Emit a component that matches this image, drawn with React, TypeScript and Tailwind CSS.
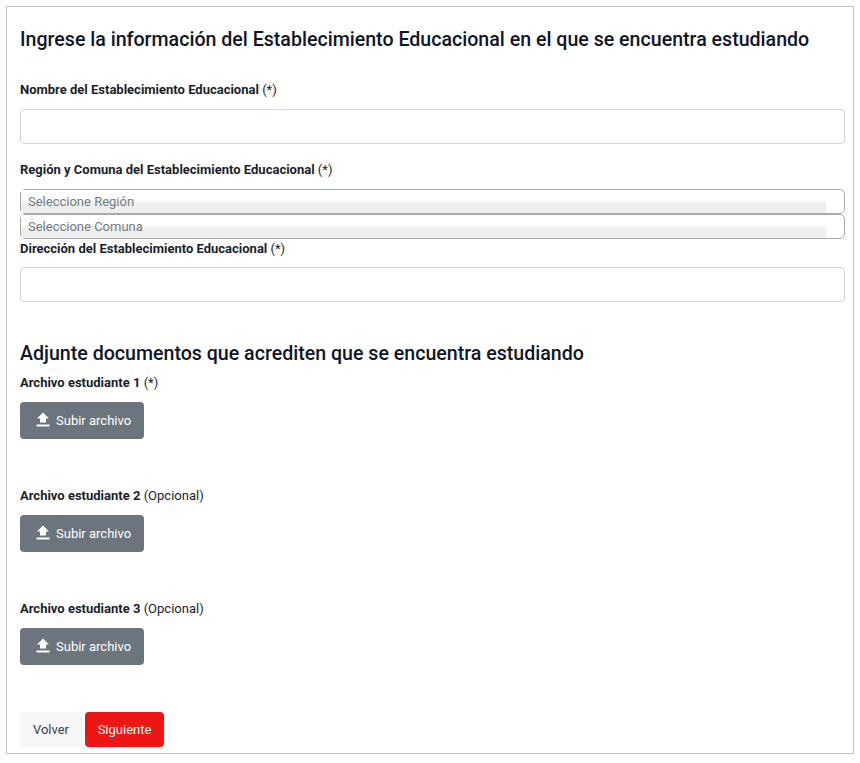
function Label({ children, note }: { children: string; note: string }) {
  return (
    <div className="text-[13px] leading-[19px] text-[#212529]">
      <span className="font-bold text-[#1a1f2b]">{children}</span> {note}
    </div>
  );
}

function TextBox() {
  return <input type="text" className="block h-[35px] w-full rounded-[4px] border border-[#ced4da] bg-white" />;
}

function SelectBox({ text }: { text: string }) {
  return (
    <div className="h-[25px] w-full rounded-[5px] border border-[#aaaaaa] bg-white pr-[18px]">
      <div className="h-[23px] bg-gradient-to-b from-white from-[40%] to-[#eeeeee] to-[60%] pl-[7px] text-[13px] leading-[24px] text-[#737b83]">
        {text}
      </div>
    </div>
  );
}

function UploadIcon() {
  return (
    <svg width="14" height="15" viewBox="0 0 14 15" fill="white" aria-hidden="true">
      <path d="M7 0.5 L13 6.5 H10 V10.5 H4 V6.5 H1 Z" />
      <rect x="0.5" y="12.5" width="13" height="2" />
    </svg>
  );
}

function UploadField({ label, note }: { label: string; note: string }) {
  return (
    <div className="h-[113px]">
      <Label note={note}>{label}</Label>
      <button className="mt-[10px] flex h-[37px] w-[124px] items-center justify-start gap-[6px] rounded-[4px] bg-[#6c757d] pl-[16px] text-[13px] text-white">
        <span className="-mt-[2px] flex"><UploadIcon /></span>
        Subir archivo
      </button>
    </div>
  );
}

export default function App() {
  return (
    <div className="h-[763px] bg-white p-[6px] font-['Roboto',sans-serif]">
      <div className="h-[748px] w-[848px] border border-[#c4c4c4] pl-[13px] pr-[8px] pt-[20px]">
        <h1 className="text-[19.6px] font-medium leading-[26px] text-[#0f1626]">
          Ingrese la información del Establecimiento Educacional en el que se encuentra estudiando
        </h1>
        <div className="mt-[27px]"><Label note="(*)">Nombre del Establecimiento Educacional</Label></div>
        <div className="mt-[10px]"><TextBox /></div>
        <div className="mt-[16px]"><Label note="(*)">Región y Comuna del Establecimiento Educacional</Label></div>
        <div className="mt-[10px]"><SelectBox text="Seleccione Región" /></div>
        <SelectBox text="Seleccione Comuna" />
        <Label note="(*)">Dirección del Establecimiento Educacional</Label>
        <div className="mt-[9px]"><TextBox /></div>
        <h2 className="mt-[39px] text-[19.6px] font-medium leading-[26px] text-[#0f1626]">
          Adjunte documentos que acrediten que se encuentra estudiando
        </h2>
        <div className="mt-[6px]">
          <UploadField label="Archivo estudiante 1" note="(*)" />
          <UploadField label="Archivo estudiante 2" note="(Opcional)" />
          <UploadField label="Archivo estudiante 3" note="(Opcional)" />
        </div>
        <div className="mt-0 flex gap-[3px]">
          <button className="h-[35px] w-[62px] rounded-[4px] bg-[#f6f6f6] text-[13px] text-[#3a4350]">Volver</button>
          <button className="h-[35px] w-[79px] rounded-[4px] bg-[#ee1515] text-[13px] text-white">Siguiente</button>
        </div>
      </div>
    </div>
  );
}
